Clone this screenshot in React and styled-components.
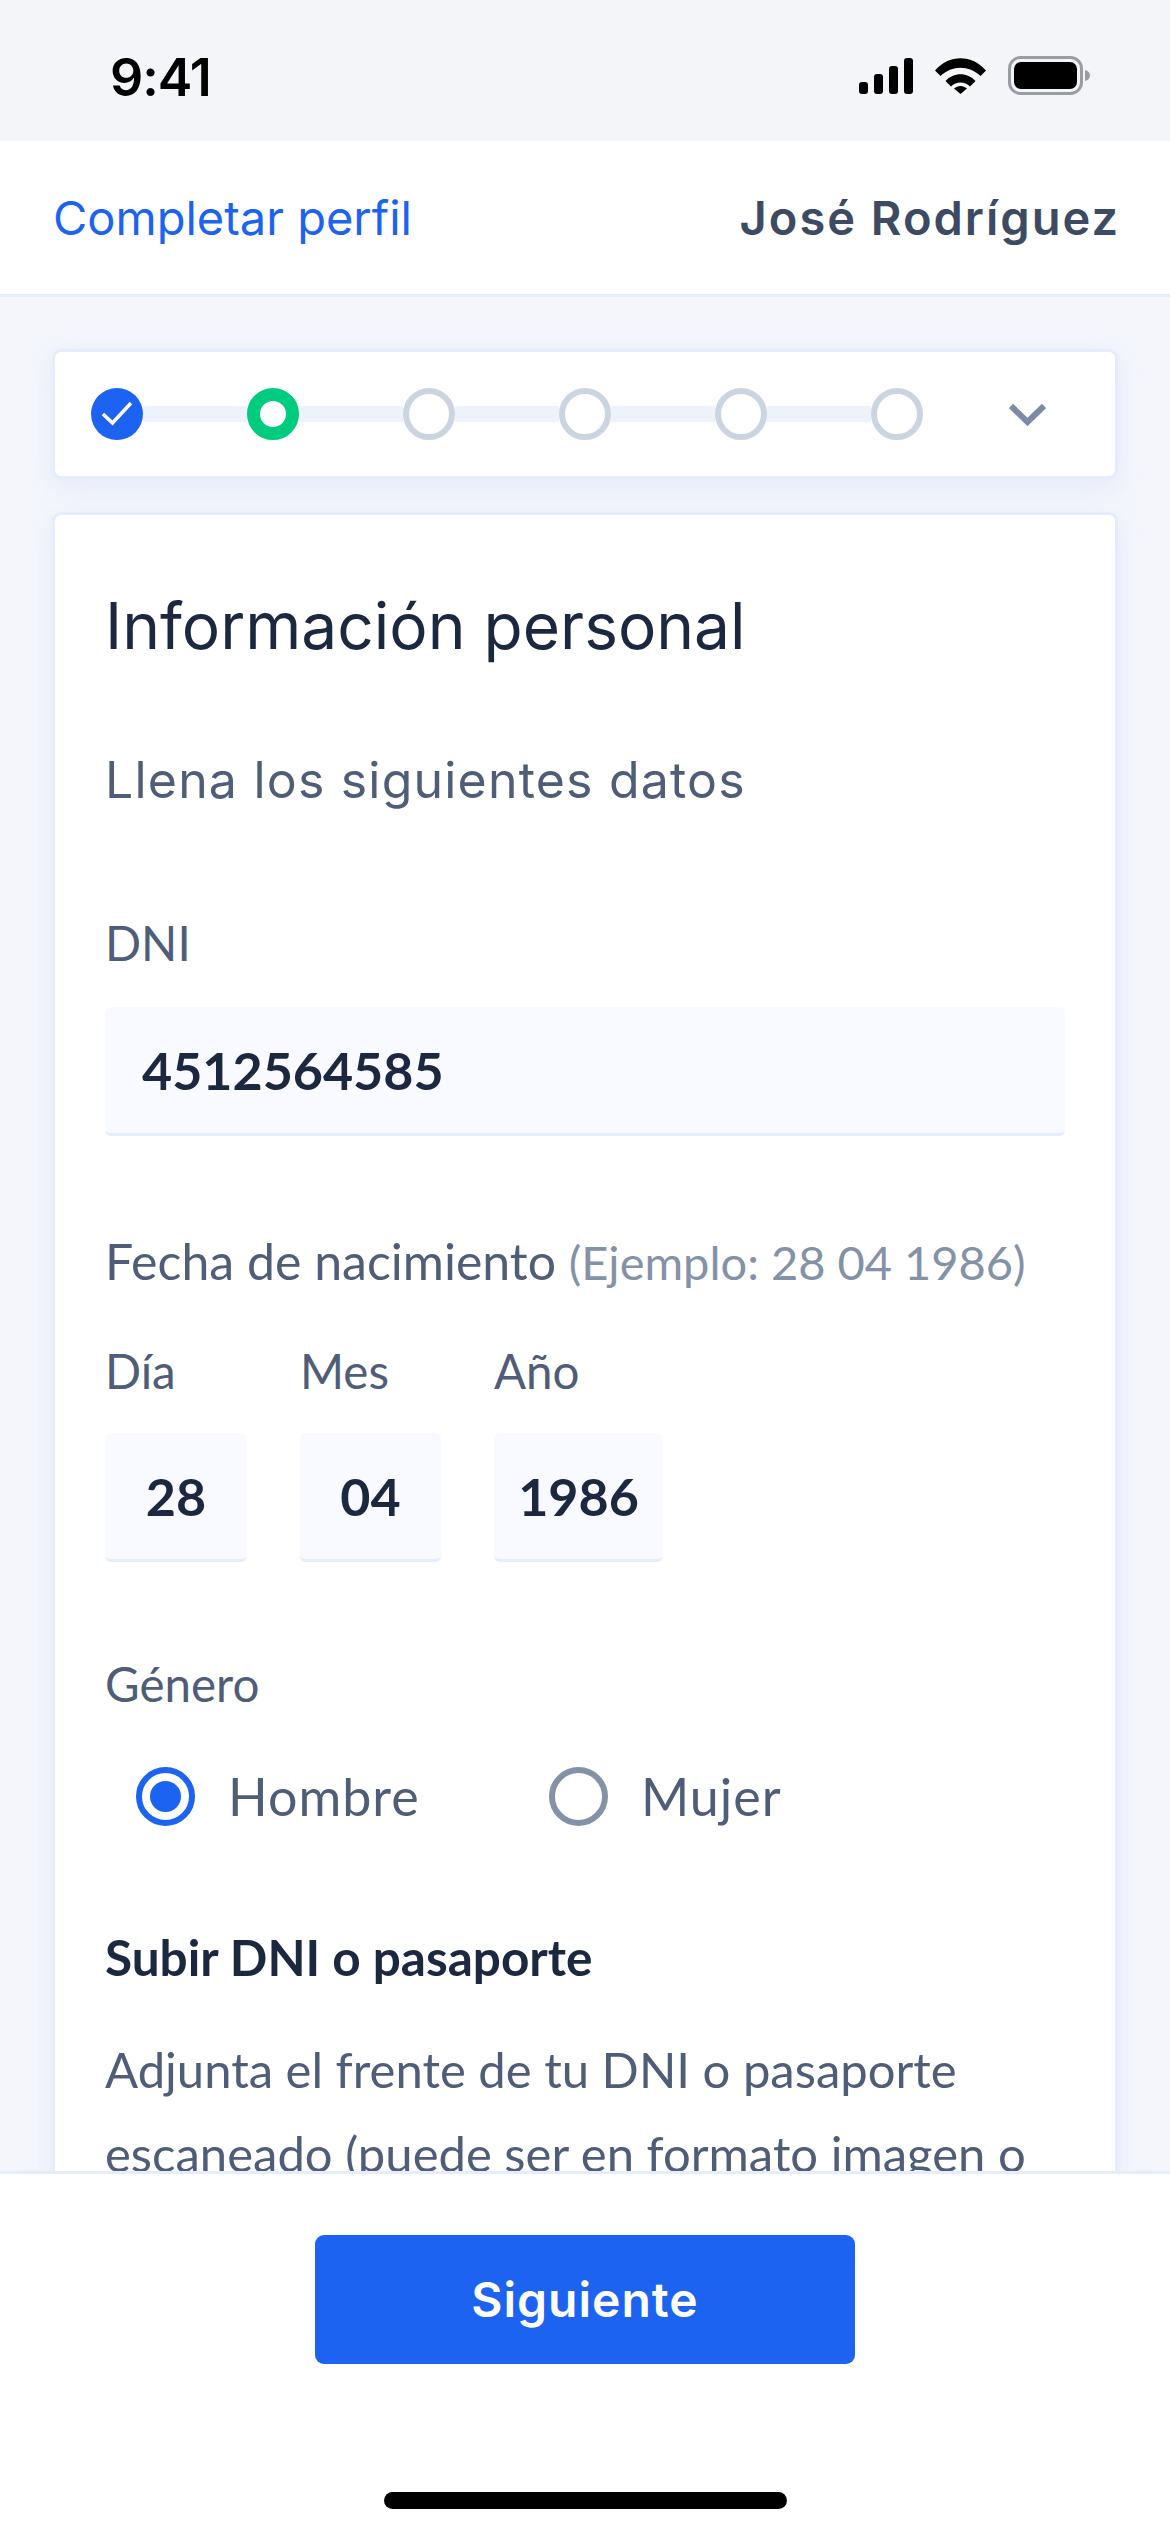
import React from 'react';
import styled, { createGlobalStyle } from 'styled-components';

const GlobalStyle = createGlobalStyle`
  html, body {
    margin: 0;
    padding: 0;
    background: #f4f6fc;
  }
`;

const Screen = styled.div`
  width: 1170px;
  height: 2532px;
  display: flex;
  flex-direction: column;
  overflow: hidden;
  background: #f4f6fc;
  font-family: "Lato", "Liberation Sans", sans-serif;
`;

const StatusBar = styled.div`
  height: 141px;
  flex-shrink: 0;
  box-sizing: border-box;
  background: #f4f5f8;
  display: flex;
  justify-content: space-between;
  align-items: flex-start;
  padding: 50px 80px 0 110px;
`;

const Time = styled.div`
  font-family: "Inter", sans-serif;
  font-weight: 600;
  font-size: 52px;
  line-height: 56px;
  letter-spacing: -1px;
  color: #000;
`;

const StatusIcons = styled.div`
  display: flex;
  align-items: center;
  gap: 22px;
  margin-top: 6px;
`;

const Header = styled.header`
  height: 156px;
  flex-shrink: 0;
  box-sizing: border-box;
  background: #fff;
  border-bottom: 3px solid #e5ecfb;
  display: flex;
  justify-content: space-between;
  align-items: center;
  padding: 0 50px 0 53px;
  font-family: "Inter", sans-serif;
`;

const HeaderLink = styled.div`
  color: #1b63f0;
  font-size: 47px;
`;

const UserName = styled.div`
  color: #3d4a63;
  font-size: 47px;
  font-weight: 600;
  letter-spacing: 2px;
`;

const Main = styled.main`
  flex: 1;
  min-height: 0;
  overflow: hidden;
  box-sizing: border-box;
  padding: 52px 52px 0;
  display: flex;
  flex-direction: column;
  gap: 33px;
`;

const Panel = styled.section`
  flex-shrink: 0;
  background: #fff;
  border: 3px solid #e5ecfb;
  border-radius: 9px;
  box-shadow: 0 8px 24px rgb(200 212 245 / 0.35);
`;

const Stepper = styled(Panel)`
  height: 130px;
  box-sizing: border-box;
  display: flex;
  align-items: center;
  padding-left: 36px;
`;

const Dot = styled.div`
  width: 52px;
  height: 52px;
  box-sizing: border-box;
  flex-shrink: 0;
  border-radius: 50%;
  display: flex;
  align-items: center;
  justify-content: center;
  background: ${p => (p.$state === 'done' ? '#1b63f0' : '#fff')};
  border: ${p =>
    p.$state === 'active' ? '13px solid #00cc7f' : p.$state === 'todo' ? '6px solid #cbd5e2' : 'none'};
`;

const Track = styled.div`
  width: 104px;
  height: 16px;
  flex-shrink: 0;
  background: #eef2fa;
`;

const Chevron = styled.svg`
  margin-left: 86px;
  flex-shrink: 0;
`;

const FormCard = styled(Panel)`
  padding: 75px 50px 0;
`;

const Title = styled.h1`
  margin: 0;
  font-family: "Inter", sans-serif;
  font-weight: 400;
  font-size: 64px;
  line-height: 72px;
  color: #1c2740;
`;

const Subtitle = styled.p`
  margin: 90px 0 0;
  font-family: "Inter", sans-serif;
  font-size: 50px;
  line-height: 56px;
  letter-spacing: 1.2px;
  color: #4f5d78;
`;

const Label = styled.div`
  font-size: 47.5px;
  line-height: 56px;
  color: #4f5d78;
`;

const DateLabel = styled(Label)`
  font-size: 50px;
`;

const Hint = styled.span`
  font-size: 47px;
  color: #8492a8;
`;

const Field = styled.div`
  margin-top: ${p => p.$top}px;
`;

const Input = styled.div`
  box-sizing: border-box;
  height: 129px;
  margin-top: ${p => p.$top || 0}px;
  background: #f9faff;
  border-bottom: 3px solid #e5ecfb;
  border-radius: 6px;
  display: flex;
  align-items: center;
  justify-content: ${p => (p.$center ? 'center' : 'flex-start')};
  padding: ${p => (p.$center ? '0' : '0 37px')};
  font-size: 52px;
  font-weight: 700;
  color: #1c2740;
`;

const DateRow = styled.div`
  display: flex;
  gap: 53px;
  margin-top: 53px;
`;

const DateCol = styled.div`
  width: ${p => p.$width}px;
`;

const RadioRow = styled.div`
  display: flex;
  margin-top: 55px;
  padding-left: 31px;
`;

const RadioOption = styled.div`
  display: flex;
  align-items: center;
  gap: 33px;
  width: 413px;
  font-size: 52px;
  line-height: 59px;
  letter-spacing: 1px;
  color: #4f5d78;
`;

const RadioMark = styled.div`
  width: 59px;
  height: 59px;
  box-sizing: border-box;
  border-radius: 50%;
  border: 6px solid ${p => (p.$on ? '#1b63f0' : '#8492a8')};
  display: flex;
  align-items: center;
  justify-content: center;
  flex-shrink: 0;
`;

const RadioDot = styled.div`
  width: 31px;
  height: 31px;
  border-radius: 50%;
  background: #1b63f0;
`;

const SectionTitle = styled.h2`
  margin: 103px 0 0;
  font-size: 49.5px;
  line-height: 56px;
  font-weight: 700;
  color: #1c2740;
`;

const Paragraph = styled.p`
  margin: 42px 0 0;
  font-size: 49px;
  line-height: 84px;
  color: #4f5d78;
`;

const Footer = styled.footer`
  height: 361px;
  flex-shrink: 0;
  box-sizing: border-box;
  background: #fff;
  border-top: 3px solid #e5ecfb;
  display: flex;
  flex-direction: column;
  align-items: center;
  padding-top: 61px;
`;

const NextButton = styled.button`
  width: 540px;
  height: 129px;
  border: 0;
  border-radius: 9px;
  background: #1b63f0;
  color: #fff;
  font-family: "Inter", sans-serif;
  font-size: 48px;
  font-weight: 600;
  letter-spacing: 1px;
`;

const HomeBar = styled.div`
  width: 403px;
  height: 17px;
  margin-top: 128px;
  border-radius: 9px;
  background: #000;
`;

const SignalIcon = () => (
  <svg width="54" height="36" viewBox="0 0 54 36">
    <rect x="0" y="24" width="9" height="12" rx="3" />
    <rect x="15" y="16" width="9" height="20" rx="3" />
    <rect x="30" y="8" width="9" height="28" rx="3" />
    <rect x="45" y="0" width="9" height="36" rx="3" />
  </svg>
);

const WifiIcon = () => (
  <svg width="51" height="36" viewBox="0 0 51 36">
    <path d="M0 12.5C14-4 37-4 51 12.5L45.5 18C34 7 17 7 5.5 18Z" />
    <path d="M10.500 23C18.500 14 32.500 14 40.500 23L35 28.500C30 23 21 23 16 28.500Z" />
    <path d="M19 30.500C23 27 28 27 32 30.500L25.500 36Z" />
  </svg>
);

const BatteryIcon = () => (
  <svg width="82" height="39" viewBox="0 0 82 39">
    <rect x="1.500" y="1.500" width="72" height="36" rx="11" fill="none" stroke="#9a9ca3" strokeWidth="3" />
    <rect x="6" y="6" width="63" height="27" rx="7" />
    <path d="M77 14C80 14.500 82 17 82 19.500C82 22 80 24.500 77 25Z" fill="#9a9ca3" />
  </svg>
);

const steps = ['done', 'active', 'todo', 'todo', 'todo', 'todo'];

const App = () => {
  return (
    <Screen>
      <GlobalStyle />
      <StatusBar>
        <Time>9:41</Time>
        <StatusIcons>
          <SignalIcon />
          <WifiIcon />
          <BatteryIcon />
        </StatusIcons>
      </StatusBar>
      <Header>
        <HeaderLink>Completar perfil</HeaderLink>
        <UserName>José Rodríguez</UserName>
      </Header>
      <Main>
        <Stepper>
          {steps.map((state, idx) => (
            <React.Fragment key={idx}>
              {idx > 0 && <Track />}
              <Dot $state={state}>
                {state === 'done' && (
                  <svg width="34" height="28" viewBox="0 0 34 28" fill="none">
                    <path d="M3 14L12.500 23L31 3" stroke="#fff" strokeWidth="3.500" />
                  </svg>
                )}
              </Dot>
            </React.Fragment>
          ))}
          <Chevron width="37" height="24" viewBox="0 0 37 24" fill="none">
            <path d="M2 4L18.500 20L35 4" stroke="#7c8aa3" strokeWidth="6" />
          </Chevron>
        </Stepper>
        <FormCard>
          <Title>Información personal</Title>
          <Subtitle>Llena los siguientes datos</Subtitle>
          <Field $top={107}>
            <Label>DNI</Label>
            <Input $top={36}>4512564585</Input>
          </Field>
          <Field $top={97}>
            <DateLabel>
              Fecha de nacimiento <Hint>(Ejemplo: 28 04 1986)</Hint>
            </DateLabel>
          </Field>
          <DateRow>
            <DateCol $width={142}>
              <Label>Día</Label>
              <Input $top={34} $center>28</Input>
            </DateCol>
            <DateCol $width={141}>
              <Label>Mes</Label>
              <Input $top={34} $center>04</Input>
            </DateCol>
            <DateCol $width={169}>
              <Label>Año</Label>
              <Input $top={34} $center>1986</Input>
            </DateCol>
          </DateRow>
          <Field $top={94}>
            <Label>Género</Label>
          </Field>
          <RadioRow>
            <RadioOption>
              <RadioMark $on><RadioDot /></RadioMark>
              Hombre
            </RadioOption>
            <RadioOption>
              <RadioMark />
              Mujer
            </RadioOption>
          </RadioRow>
          <SectionTitle>Subir DNI o pasaporte</SectionTitle>
          <Paragraph>
            Adjunta el frente de tu DNI o pasaporte escaneado (puede ser en formato imagen o PDF)
          </Paragraph>
        </FormCard>
      </Main>
      <Footer>
        <NextButton>Siguiente</NextButton>
        <HomeBar />
      </Footer>
    </Screen>
  );
};

export default App;
